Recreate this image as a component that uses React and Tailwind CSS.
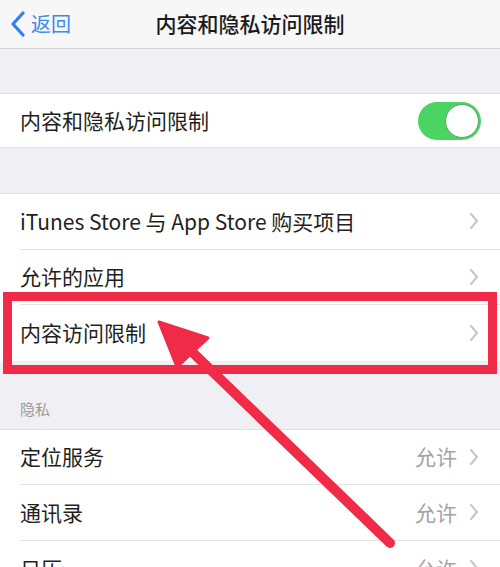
import React from 'react';

const font = { fontFamily: '"Noto Sans CJK SC", "Noto Sans", sans-serif' };

const Chevron = () => (
  <svg width="10" height="18" viewBox="0 0 10 18" className="shrink-0">
    <polyline points="2,2 8,9 2,16" fill="none" stroke="#c4c4c9" strokeWidth="2" strokeLinecap="round" strokeLinejoin="round" />
  </svg>
);

const Row = ({ label, value, last, children }) => (
  <div className="relative flex h-[55.5px] items-center bg-white pl-5">
    <div className={`flex h-full flex-1 items-center pr-[21px] ${last ? '' : 'border-b border-[#e3e3e6]'}`}>
      <span className="flex-1 text-[21px] text-[#1f1f21]">{label}</span>
      {value && <span className="mr-[12px] text-[21px] text-[#a3a3a8]">{value}</span>}
      <Chevron />
    </div>
    {children}
  </div>
);

const App = () => {
  return (
    <div className="relative h-[567px] w-[500px] overflow-hidden bg-[#efeff4]" style={font}>
      {/* nav bar */}
      <div className="relative flex h-[49px] items-center justify-center border-b border-[#d4d4d8] bg-[#f7f7f8]">
        <div className="absolute left-[10px] top-0 flex h-full items-center gap-[5px]">
          <svg width="16" height="26" viewBox="0 0 16 26">
            <polyline points="13,2 3,13 13,24" fill="none" stroke="#2f80ee" strokeWidth="3.2" strokeLinecap="round" strokeLinejoin="round" />
          </svg>
          <span className="text-[20px] text-[#3d8ae8]">返回</span>
        </div>
        <span className="text-[21px] font-medium text-[#1a1a1a]">内容和隐私访问限制</span>
      </div>

      <div className="h-[44px]" />

      <div className="flex h-[55px] items-center justify-between border-y border-[#e3e3e6] bg-white pl-5 pr-[19px]">
        <span className="text-[21px] text-[#1f1f21]">内容和隐私访问限制</span>
        <div className="flex h-[38px] w-[63px] items-center justify-end rounded-full bg-[#4cd462] p-[2px]">
          <div className="h-[34px] w-[34px] rounded-full border border-[#5c9e6a] bg-white" />
        </div>
      </div>

      <div className="h-[45px]" />

      <div className="border-t border-[#e3e3e6]">
        <Row label="iTunes Store 与 App Store 购买项目" />
        <Row label="允许的应用" />
        <Row label="内容访问限制" last>
          <div className="absolute -top-[13px] -bottom-[13px] left-[3px] right-[3px] border-[9px] border-[#ef2b47]" />
        </Row>
      </div>

      <div className="flex h-[68px] items-end px-5 pb-[8px]">
        <span className="text-[15px] text-[#9a9aa0]">隐私</span>
      </div>

      <div className="border-t border-[#e3e3e6]">
        <Row label="定位服务" value="允许" />
        <Row label="通讯录" value="允许" />
        <Row label="日历" value="允许" last />
      </div>

      {/* annotation arrow */}
      <svg className="pointer-events-none absolute inset-0" width="500" height="567" viewBox="0 0 500 567">
        <line x1="188" y1="348" x2="390" y2="543" stroke="#ef2b47" strokeWidth="10" strokeLinecap="round" />
        <polygon points="159,322 208,338 177,367" fill="#ef2b47" stroke="#ef2b47" strokeWidth="3" strokeLinejoin="round" />
      </svg>
    </div>
  );
};

export default App;
